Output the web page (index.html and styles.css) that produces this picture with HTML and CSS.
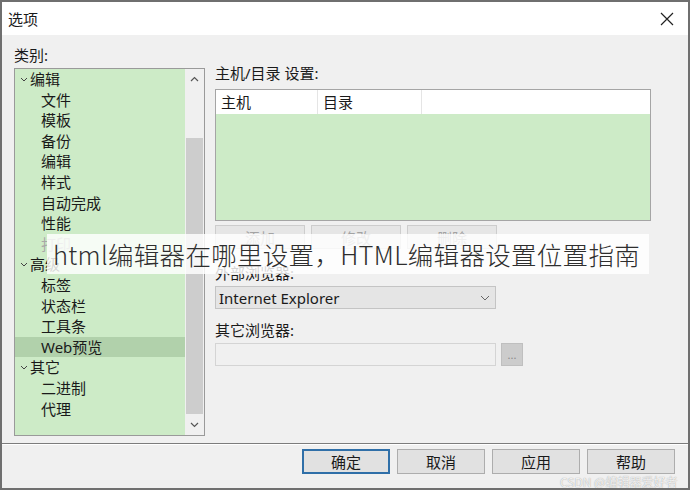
FILE: index.html
```html
<!DOCTYPE html>
<html lang="zh-CN">

<head>
    <meta charset="UTF-8">
    <meta name="viewport" content="width=device-width, initial-scale=1.0">
    <title>选项</title>
    <link rel="stylesheet" href="styles.css">
</head>

<body>
    <div class="window">
        <div class="titlebar">
            <span class="title">选项</span>
            <svg class="close" width="14" height="14" viewBox="0 0 14 14">
                <path d="M1 1 L13 13 M13 1 L1 13" stroke="#222" stroke-width="1.2" fill="none" />
            </svg>
        </div>

        <div class="content">
            <div class="left">
                <div class="label">类别:</div>
                <div class="tree">
                    <ul class="items">
                        <li class="parent"><svg class="arrow" width="8" height="5" viewBox="0 0 8 5"><path d="M1 1 L4 4 L7 1" stroke="#444" fill="none" /></svg>编辑</li>
                        <li class="child">文件</li>
                        <li class="child">模板</li>
                        <li class="child">备份</li>
                        <li class="child">编辑</li>
                        <li class="child">样式</li>
                        <li class="child">自动完成</li>
                        <li class="child">性能</li>
                        <li class="child off">打印</li>
                        <li class="parent"><svg class="arrow" width="8" height="5" viewBox="0 0 8 5"><path d="M1 1 L4 4 L7 1" stroke="#444" fill="none" /></svg>高级</li>
                        <li class="child">标签</li>
                        <li class="child">状态栏</li>
                        <li class="child">工具条</li>
                        <li class="child active">Web预览</li>
                        <li class="parent"><svg class="arrow" width="8" height="5" viewBox="0 0 8 5"><path d="M1 1 L4 4 L7 1" stroke="#444" fill="none" /></svg>其它</li>
                        <li class="child">二进制</li>
                        <li class="child">代理</li>
                    </ul>
                    <div class="scrollbar">
                        <div class="sb-btn"><svg width="9" height="6" viewBox="0 0 9 6"><path d="M1 5 L4.5 1.5 L8 5" stroke="#555" stroke-width="1.2" fill="none" /></svg></div>
                        <div class="track"><div class="thumb"></div></div>
                        <div class="sb-btn"><svg width="9" height="6" viewBox="0 0 9 6"><path d="M1 1 L4.5 4.5 L8 1" stroke="#555" stroke-width="1.2" fill="none" /></svg></div>
                    </div>
                </div>
            </div>

            <div class="right">
                <div class="label">主机/目录 设置:</div>
                <div class="listview">
                    <div class="header">
                        <span class="col col1">主机</span>
                        <span class="col col2">目录</span>
                        <span class="col last"></span>
                    </div>
                </div>
                <div class="btnrow">
                    <button class="small" disabled>添加</button>
                    <button class="small" disabled>修改</button>
                    <button class="small" disabled>删除</button>
                </div>

                <div class="label gap1">外部浏览器:</div>
                <div class="combo">
                    <span>Internet Explorer</span>
                    <svg width="10" height="6" viewBox="0 0 10 6"><path d="M1 1 L5 5 L9 1" stroke="#666" fill="none" /></svg>
                </div>

                <div class="label gap2">其它浏览器:</div>
                <div class="pathrow">
                    <div class="field"></div>
                    <div class="dots">...</div>
                </div>
            </div>
        </div>

        <div class="footer">
            <button class="big default">确定</button>
            <button class="big">取消</button>
            <button class="big">应用</button>
            <button class="big">帮助</button>
        </div>

        <div class="banner">html编辑器在哪里设置，HTML编辑器设置位置指南</div>
        <div class="mark">CSDN @编辑器爱好者</div>
    </div>
</body>

</html>
```

FILE: styles.css
```css
* {
    box-sizing: border-box;
}

body {
    margin: 0;
    font-family: "Noto Sans", "Noto Sans CJK SC", sans-serif;
    font-size: 15px;
    color: #1a1a1a;
}

.window {
    position: relative;
    width: 690px;
    height: 490px;
    overflow: hidden;
    background: #f0f0f0;
    border: 2px solid #6f6f6f;
}

.titlebar {
    height: 33px;
    background: #fff;
    display: flex;
    align-items: center;
    justify-content: space-between;
    padding: 0 14px 0 6px;
}

.title {
    font-size: 15px;
    line-height: 20px;
}

.content {
    display: grid;
    grid-template-columns: 191px 436px;
    column-gap: 10px;
    padding: 10px 0 0 12px;
    height: 408px;
}

.label {
    line-height: 20px;
    height: 20px;
}

.tree {
    margin-top: 3px;
    height: 368px;
    border: 1px solid #9a9a9a;
    background: #cdebc7;
    display: flex;
}

.items {
    list-style: none;
    margin: 0;
    padding: 0;
    flex: 1;
}

.items li {
    height: 20.6px;
    line-height: 20.6px;
    white-space: nowrap;
}

.parent {
    padding-left: 5px;
}

.arrow {
    margin-right: 2px;
    vertical-align: 3px;
}

.child {
    padding-left: 26px;
}

.off {
    color: #a8a8a8;
}

.active {
    background: #b1d1ab;
}

.scrollbar {
    width: 19px;
    background: #f0f0f0;
    display: flex;
    flex-direction: column;
}

.sb-btn {
    height: 20px;
    display: flex;
    align-items: center;
    justify-content: center;
}

.track {
    flex: 1;
    padding: 49px 1px 0 1px;
}

.thumb {
    height: 276px;
    background: #cdcdcd;
}

.right {
    padding-top: 18px;
}

.listview {
    margin-top: 6px;
    height: 132px;
    border: 1px solid #a5a5a5;
    background: #cdebc7;
}

.header {
    display: flex;
    height: 24px;
    background: #fff;
}

.col {
    line-height: 24px;
    padding-left: 5px;
    border-right: 1px solid #e5e5e5;
}

.col1 {
    width: 102px;
}

.col2 {
    width: 104px;
}

.last {
    flex: 1;
    border-right: none;
}

.btnrow {
    display: flex;
    gap: 6px;
    margin-top: 4px;
}

button {
    font-family: inherit;
    font-size: 15px;
    color: #1a1a1a;
    border: 1px solid #adadad;
    background: #e1e1e1;
    padding: 0;
}

.small {
    width: 90px;
    height: 24px;
    background: #e6e6e6;
    border-color: #cdcdcd;
    color: #a3a3a3;
}

.gap1 {
    margin-top: 14px;
}

.gap2 {
    margin-top: 11px;
}

.combo {
    margin-top: 3px;
    width: 281px;
    height: 23px;
    background: #e5e5e5;
    border: 1px solid #c4c4c4;
    display: flex;
    align-items: center;
    justify-content: space-between;
    padding: 0 5px 0 3px;
}

.pathrow {
    margin-top: 3px;
    display: flex;
    gap: 5px;
}

.field {
    width: 281px;
    height: 23px;
    background: #f0f0f0;
    border: 1px solid #d4d4d4;
}

.dots {
    width: 22px;
    height: 23px;
    background: #cccccc;
    border: 1px solid #bfbfbf;
    color: #8a8a8a;
    font-size: 11px;
    text-align: center;
    line-height: 22px;
}

.footer {
    border-top: 1px solid #7c7c7c;
    box-shadow: inset 0 1px 0 #fff;
    display: flex;
    justify-content: flex-end;
    gap: 7px;
    padding: 5px 13px 0 0;
    height: 45px;
}

.big {
    width: 88px;
    height: 25px;
}

.default {
    border: 2px solid #2f6fa8;
}

.banner {
    position: absolute;
    left: 45px;
    top: 232px;
    width: 602px;
    height: 40px;
    padding-left: 6px;
    background: rgba(255, 255, 255, 0.82);
    font-family: "Noto Sans CJK SC", sans-serif;
    font-size: 25.5px;
    font-weight: 300;
    letter-spacing: 0.3px;
    line-height: 40px;
    color: #2e2e2e;
    white-space: nowrap;
}

.mark {
    position: absolute;
    left: 558px;
    top: 471px;
    font-family: "Noto Sans CJK SC", sans-serif;
    font-size: 12px;
    color: rgba(255, 255, 255, 0.85);
    text-shadow: 0 0 1px #8c8c8c;
    white-space: nowrap;
}
```
